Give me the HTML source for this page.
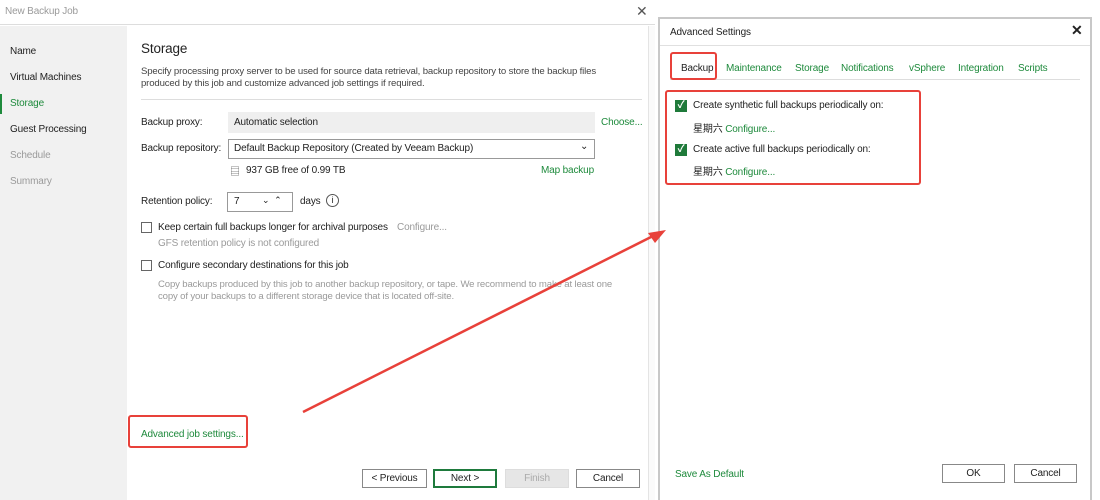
<!DOCTYPE html>
<html><head><meta charset="utf-8"><style>
*{box-sizing:border-box;margin:0;padding:0}
body{width:1100px;height:500px;overflow:hidden;background:#fff;font-family:"Liberation Sans","Noto Sans CJK SC",sans-serif;font-size:10px;letter-spacing:-0.15px;color:#222;position:relative}
.a{position:absolute;white-space:nowrap}
.g{color:#1e8a3c}
.gr{color:#9a9a9a}
.btn{position:absolute;border:1px solid #888;background:#fff;text-align:center;font-size:10px;line-height:17px;height:19px}
.cb{position:absolute;width:11px;height:11px;border:1px solid #666;background:#fff}
.ck{position:absolute;width:12px;height:12px;background:#1f7a3a;color:#fff;font-size:10px;line-height:12px;text-align:center;font-weight:bold}
</style></head><body>
<div class="a" style="left:0;top:0;width:655px;height:25px;border-bottom:1px solid #ddd"></div>
<div class="a gr" style="left:5px;top:6px">New Backup Job</div>
<div class="a" style="left:636px;top:3px;font-size:14px;color:#555">✕</div>
<div class="a" style="left:0;top:26px;width:127px;height:474px;background:#f1f1f1"></div>
<div class="a" style="left:648px;top:26px;width:7px;height:474px;background:#fafafa;border-left:1px solid #e4e4e4"></div>
<div class="a" style="left:10px;top:46px">Name</div>
<div class="a" style="left:10px;top:72px">Virtual Machines</div>
<div class="a" style="left:0;top:94px;width:2px;height:20px;background:#1e8a3c"></div>
<div class="a g" style="left:10px;top:98px">Storage</div>
<div class="a" style="left:10px;top:124px">Guest Processing</div>
<div class="a gr" style="left:10px;top:150px">Schedule</div>
<div class="a gr" style="left:10px;top:176px">Summary</div>

<div class="a" style="left:141px;top:41px;font-size:13.5px">Storage</div>
<div class="a" style="left:141px;top:66px;line-height:12px;font-size:9.6px;color:#444">Specify processing proxy server to be used for source data retrieval, backup repository to store the backup files<br>produced by this job and customize advanced job settings if required.</div>
<div class="a" style="left:141px;top:99px;width:501px;height:1px;background:#ddd"></div>
<div class="a" style="left:141px;top:117px">Backup proxy:</div>
<div class="a" style="left:228px;top:112px;width:367px;height:21px;background:#efefef"></div>
<div class="a" style="left:234px;top:117px">Automatic selection</div>
<div class="a g" style="left:601px;top:117px">Choose...</div>
<div class="a" style="left:141px;top:143px">Backup repository:</div>
<div class="a" style="left:228px;top:139px;width:367px;height:20px;border:1px solid #999"></div>
<div class="a" style="left:234px;top:143px">Default Backup Repository (Created by Veeam Backup)</div>
<div class="a" style="left:580px;top:141px;font-size:10px">⌄</div>
<div class="a" style="left:230px;top:163px;font-size:10px;color:#666">▤</div>
<div class="a" style="left:246px;top:165px">937 GB free of 0.99 TB</div>
<div class="a g" style="left:541px;top:165px">Map backup</div>
<div class="a" style="left:141px;top:196px">Retention policy:</div>
<div class="a" style="left:227px;top:192px;width:66px;height:20px;border:1px solid #999"></div>
<div class="a" style="left:234px;top:196px">7</div>
<div class="a" style="left:262px;top:195px;font-size:9px">⌄ &nbsp;⌃</div>
<div class="a" style="left:300px;top:196px">days</div>
<div class="a" style="left:326px;top:194px;width:13px;height:13px;border:1px solid #555;border-radius:50%;font-size:9px;text-align:center;line-height:11px">i</div>
<div class="cb" style="left:141px;top:222px"></div>
<div class="a" style="left:158px;top:222px">Keep certain full backups longer for archival purposes</div>
<div class="a gr" style="left:397px;top:222px">Configure...</div>
<div class="a gr" style="left:158px;top:238px">GFS retention policy is not configured</div>
<div class="cb" style="left:141px;top:260px"></div>
<div class="a" style="left:158px;top:260px">Configure secondary destinations for this job</div>
<div class="a gr" style="left:158px;top:279px;line-height:12px;font-size:9.6px">Copy backups produced by this job to another backup repository, or tape. We recommend to make at least one<br>copy of your backups to a different storage device that is located off-site.</div>

<div class="a" style="left:128px;top:415px;width:120px;height:33px;border:2px solid #e8413a;border-radius:3px"></div>
<div class="a g" style="left:141px;top:429px">Advanced job settings...</div>
<div class="btn" style="left:362px;top:469px;width:65px">&lt; Previous</div>
<div class="btn" style="left:433px;top:469px;width:64px;border:2px solid #1e7a3c;line-height:15px">Next &gt;</div>
<div class="btn" style="left:505px;top:469px;width:64px;background:#e6e6e6;border-color:#ddd;color:#aaa">Finish</div>
<div class="btn" style="left:576px;top:469px;width:64px">Cancel</div>

<div class="a" style="left:658px;top:17px;width:434px;height:483px;border:2px solid #c8c8c8;border-bottom:none;background:#fff"></div>
<div class="a" style="left:670px;top:27px">Advanced Settings</div>
<div class="a" style="left:1071px;top:22px;font-size:14px;font-weight:bold">✕</div>
<div class="a" style="left:660px;top:45px;width:430px;height:1px;background:#e0e0e0"></div>
<div class="a" style="left:681px;top:63px">Backup</div>
<div class="a g" style="left:726px;top:63px">Maintenance</div>
<div class="a g" style="left:795px;top:63px">Storage</div>
<div class="a g" style="left:841px;top:63px">Notifications</div>
<div class="a g" style="left:909px;top:63px">vSphere</div>
<div class="a g" style="left:958px;top:63px">Integration</div>
<div class="a g" style="left:1018px;top:63px">Scripts</div>
<div class="a" style="left:670px;top:79px;width:410px;height:1px;background:#ddd"></div>
<div class="a" style="left:670px;top:52px;width:47px;height:28px;border:2px solid #e8413a;border-radius:3px"></div>
<div class="a" style="left:665px;top:90px;width:256px;height:95px;border:2px solid #e8413a;border-radius:3px"></div>
<div class="ck" style="left:675px;top:100px">✓</div>
<div class="a" style="left:693px;top:100px">Create synthetic full backups periodically on:</div>
<div class="a" style="left:693px;top:120px">星期六 <span class="g">Configure...</span></div>
<div class="ck" style="left:675px;top:144px">✓</div>
<div class="a" style="left:693px;top:144px">Create active full backups periodically on:</div>
<div class="a" style="left:693px;top:163px">星期六 <span class="g">Configure...</span></div>
<div class="a g" style="left:675px;top:469px">Save As Default</div>
<div class="btn" style="left:942px;top:464px;width:63px">OK</div>
<div class="btn" style="left:1014px;top:464px;width:63px">Cancel</div>

<svg class="a" style="left:0;top:0" width="1100" height="500">
<line x1="303" y1="412" x2="655" y2="235" stroke="#e8413a" stroke-width="2.5"/>
<polygon points="666,230 648,233 655,243" fill="#e8413a"/>
</svg>
</body></html>
